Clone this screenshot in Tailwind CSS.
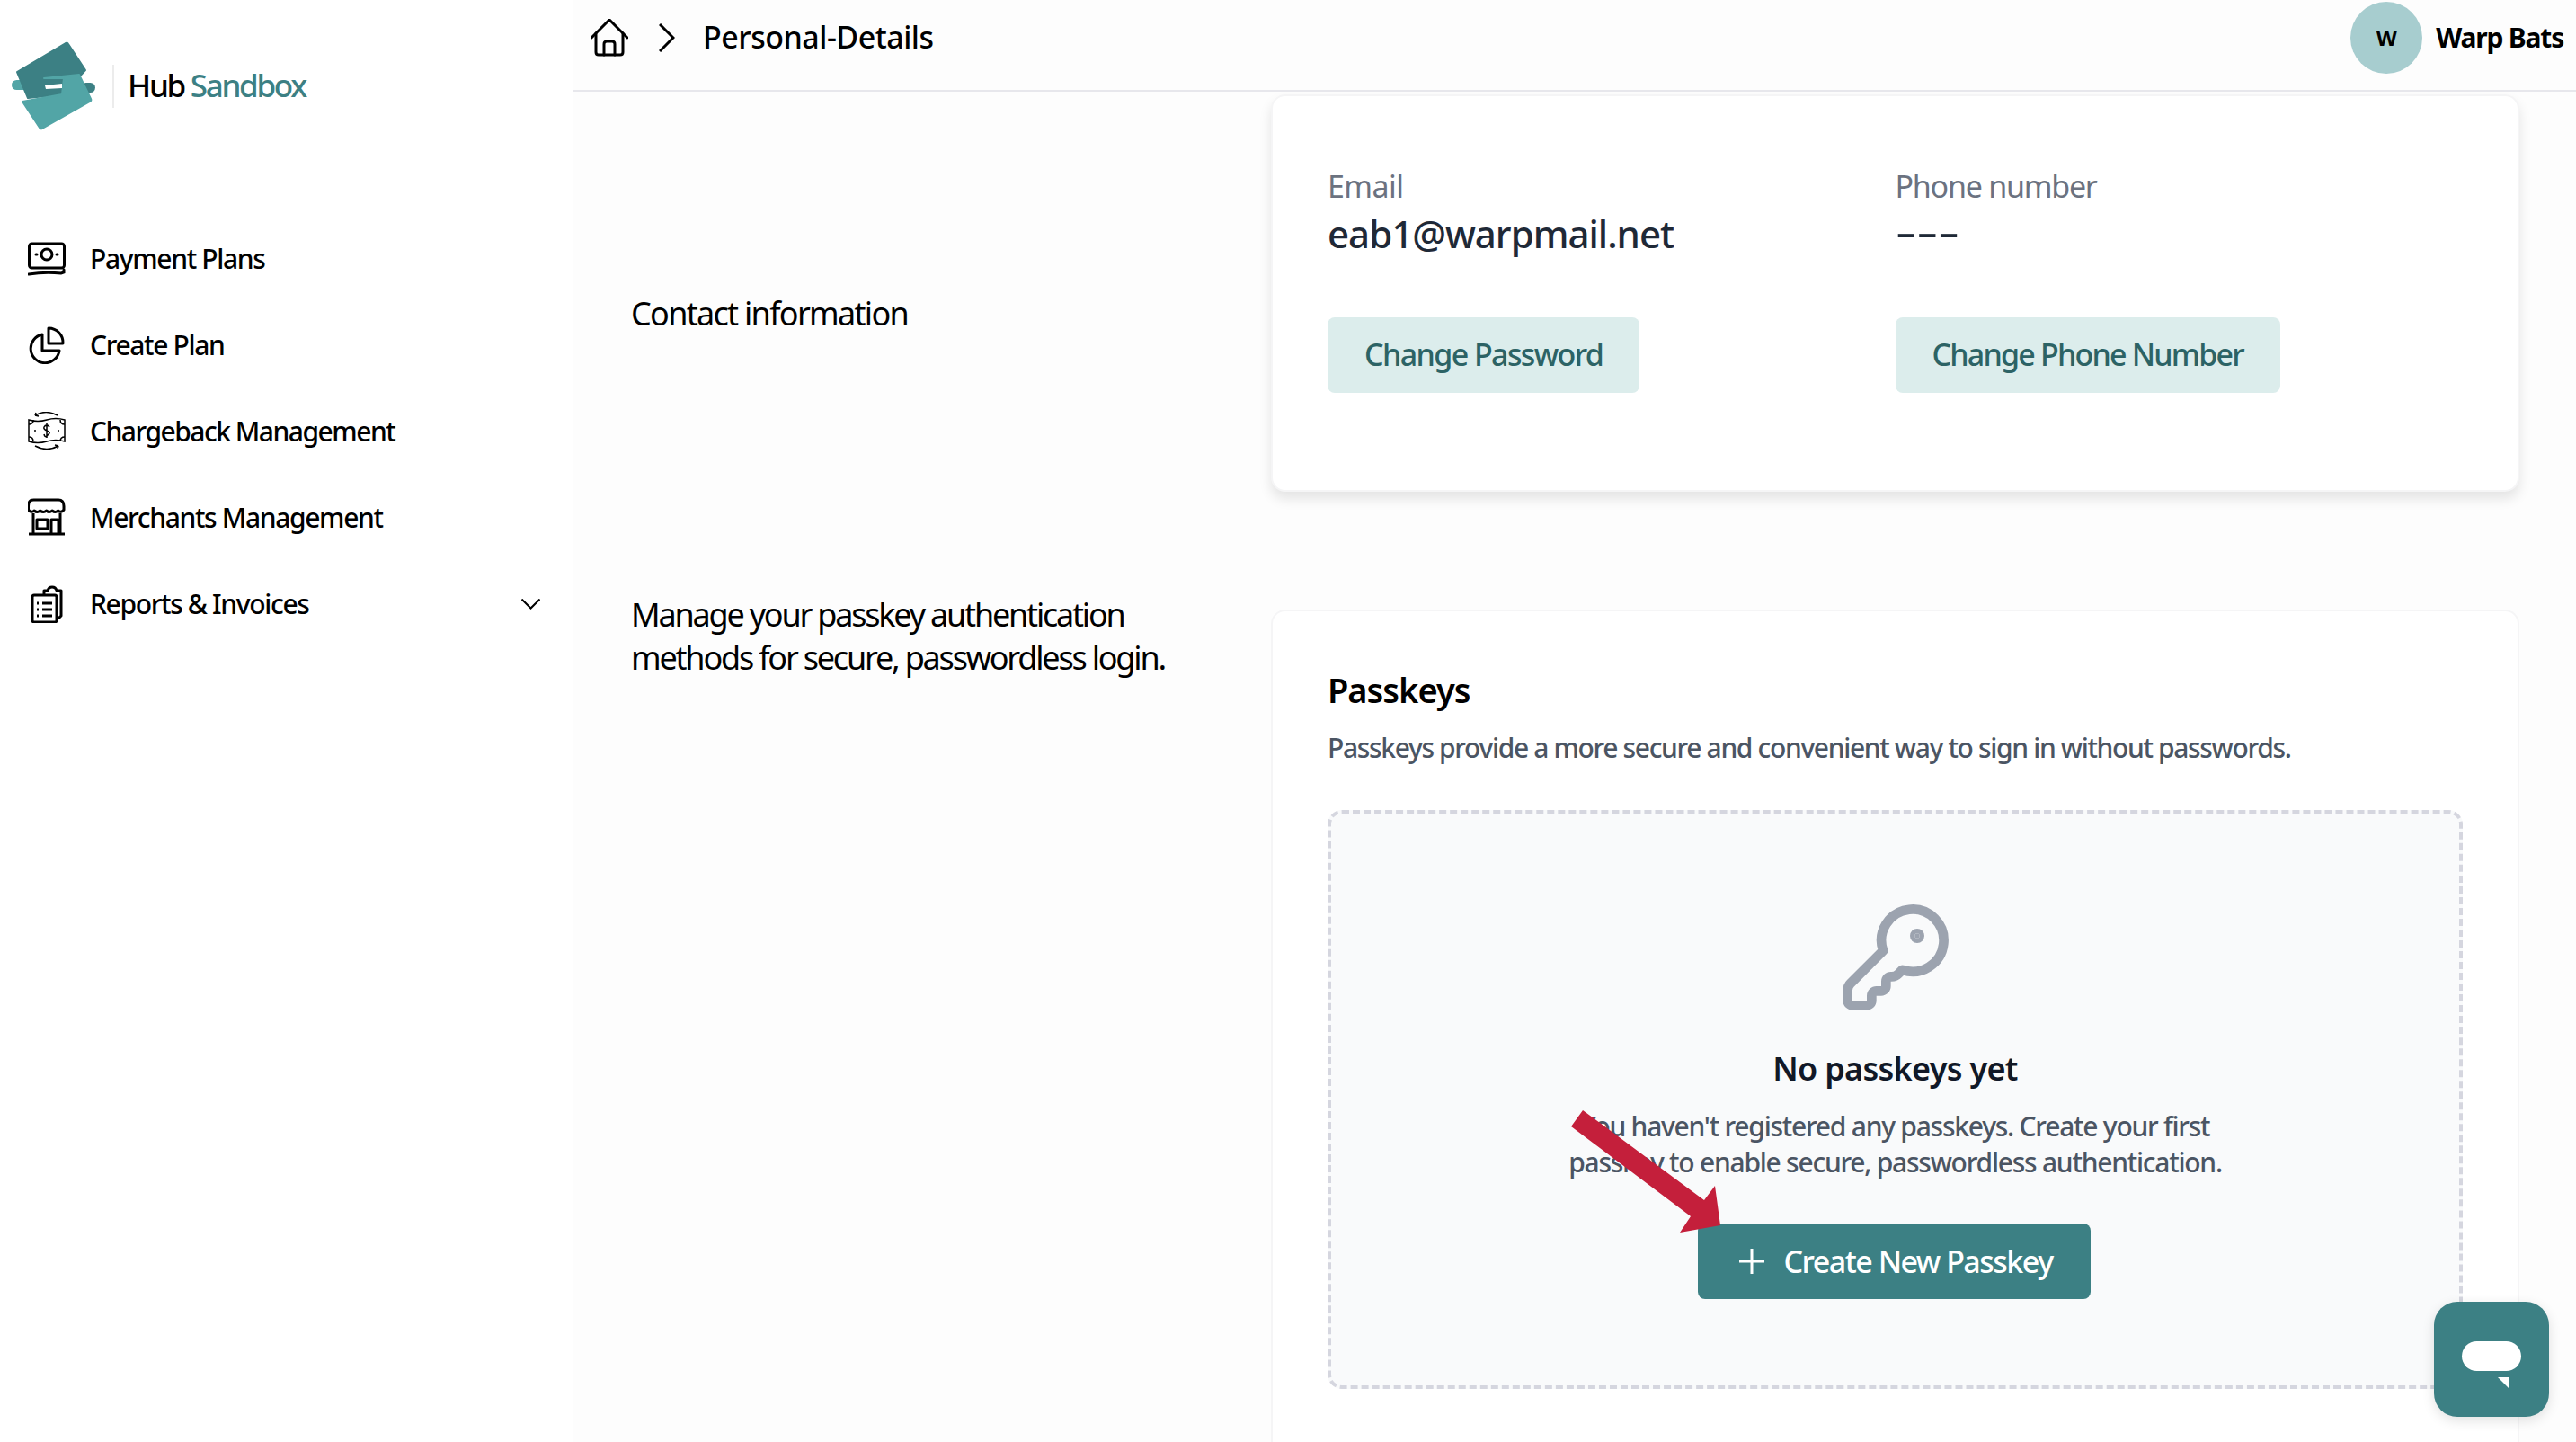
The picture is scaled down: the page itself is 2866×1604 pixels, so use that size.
<!DOCTYPE html>
<html lang="en">
<head>
<meta charset="UTF-8">
<title>Personal Details</title>
<script src="https://cdn.jsdelivr.net/npm/@tailwindcss/browser@4"></script>
</head>
<body class="bg-white font-['Noto_Sans',sans-serif] text-black">
<div class="relative flex h-[1604px] w-[2866px] overflow-hidden">

  <!-- Sidebar -->
  <aside class="h-full w-[638px] shrink-0 bg-white">
    <div class="flex h-[239px] items-start pt-[46px] pl-[12px]">
      <svg class="h-[100px] w-[100px] shrink-0" viewBox="12 46 100 100">
        <rect x="13" y="89" width="20" height="11" rx="5.5" fill="#52a5a6"/>
        <rect x="90" y="92" width="16" height="11" rx="5.5" fill="#3c8084"/>
        <path d="M19 80 L73 48 Q75 47 76 49 L95 78 L70 105 L31 109 Z" fill="#3c8084" stroke="#3c8084" stroke-width="2" stroke-linejoin="round"/>
        <path d="M49 87 L88 83 L101 110 Q102 112 100 113 L47 143 Q45 144 44 142 L25 113 L69 105 L71 87 Z" fill="#52a5a6" stroke="#52a5a6" stroke-width="2" stroke-linejoin="round"/>
        <path d="M50 95 L69 93 L69 98 L51 99 Z" fill="#fff"/>
      </svg>
      <div class="mt-[26px] ml-[13px] h-[48px] w-[2px] bg-[#ececec]"></div>
      <div class="mt-[25px] ml-[15px] text-[35px] leading-[48px] font-medium tracking-[-2.3px]">Hub <span class="text-[#3c8084]">Sandbox</span></div>
    </div>
    <nav class="flex flex-col text-[30px] font-medium tracking-[-1.35px]">
      <div class="flex h-[96px] items-center pl-[31px]">
        <svg class="mt-[4px] h-[42px] w-[42px] shrink-0" viewBox="0 0 42 42" fill="none" stroke="#000" stroke-width="3">
          <rect x="1.5" y="3" width="39" height="27" rx="3"/>
          <circle cx="21" cy="15" r="6"/>
          <path d="M9 15h1M32 15h1M1 37q18-3 36-1l3-1v-3" stroke-linecap="round"/>
        </svg>
        <span class="ml-[27px]">Payment Plans</span>
      </div>
      <div class="flex h-[96px] items-center pl-[31px]">
        <svg class="mt-[1px] h-[42px] w-[42px] shrink-0" viewBox="0 0 42 42" fill="none" stroke="#000" stroke-width="3" stroke-linejoin="round">
          <path d="M16 9A16 16 0 1 0 35 27H16Z"/>
          <path d="M23 2a16 16 0 0 1 16 17H23Z"/>
        </svg>
        <span class="ml-[27px]">Create Plan</span>
      </div>
      <div class="flex h-[96px] items-center pl-[31px]">
        <svg class="h-[42px] w-[42px] shrink-0" viewBox="0 0 42 42" fill="none" stroke="#000" stroke-width="1.5">
          <path d="M1 9q10 3 20 0t20 0v24q-10-3-20 0t-20 0Z"/>
          <path d="M8 4Q20-3 33 4M8 4l1-3M8 4l4 1M34 38Q21 45 8 38M34 38l-1 3M34 38l-4-1M1 14q5 0 5-5M41 14q-5 0-5-5M1 28q5 0 5 5M41 28q-5 0-5 5M7 21h2M33 21h2"/>
          <path d="M24 17q-1-2-3-2t-3 2 3 4 3 3-3 3-3-2M21 13v16"/>
        </svg>
        <span class="ml-[27px] tracking-[-1.5px]">Chargeback Management</span>
      </div>
      <div class="flex h-[96px] items-center pl-[31px]">
        <svg class="h-[42px] w-[42px] shrink-0" viewBox="0 0 42 42" fill="none" stroke="#000" stroke-width="3" stroke-linejoin="round">
          <path d="M8 2h26q6 0 6 7v4q-3 4-6.500 1-3 3-6.500 0-3 3-6.500 0-3 3-7 0-3 3-6.500 0-3 3-6.500-1V9q0-7 6-7Z"/>
          <path d="M6 17v23M36 17v23M1 40h40"/>
          <rect x="10" y="24" width="12" height="10"/>
          <path d="M26 40V24h8v16"/>
        </svg>
        <span class="ml-[27px]">Merchants Management</span>
      </div>
      <div class="flex h-[96px] items-center pl-[31px]">
        <svg class="mt-[1px] h-[42px] w-[42px] shrink-0" viewBox="0 0 42 42" fill="none" stroke="#000" stroke-width="3" stroke-linejoin="round">
          <path d="M18 10V6h4q1-4 5-4t5 4h5v28l-2 2h-3"/>
          <rect x="5" y="11" width="27" height="30" rx="2"/>
          <path d="M10 20h2M16 20h11M10 27h2M16 27h11M10 34h2M16 34h11"/>
        </svg>
        <span class="ml-[27px] flex-1">Reports &amp; Invoices</span>
        <svg class="mt-[2px] mr-[37px] h-[12px] w-[21px]" viewBox="0 0 21 12" fill="none" stroke="#000" stroke-width="2"><path d="M.500.500l10 10 10-10"/></svg>
      </div>
    </nav>
  </aside>

  <!-- Main -->
  <div class="flex h-full flex-1 flex-col bg-[#fdfdfd]">
    <header class="flex h-[102px] shrink-0 items-start border-b-2 border-[#e7e7ec] pt-[2px] pr-[14px] pl-[19px]">
      <div class="flex h-[80px] flex-1 items-center">
        <svg class="h-[42px] w-[42px]" viewBox="0 0 42 42" fill="none" stroke="#000" stroke-width="3" stroke-linecap="round" stroke-linejoin="round">
          <path d="M1 21 21 1l20 20"/>
          <path d="M6 16v21q0 3 3 3h24q3 0 3-3V16"/>
          <path d="M15 40V28q0-3 3-3h6q3 0 3 3v12"/>
        </svg>
        <svg class="ml-[34px] h-[32px] w-[18px]" viewBox="0 0 18 32" fill="none" stroke="#000" stroke-width="3"><path d="M1 1l15 15L1 31"/></svg>
        <span class="-mt-[2px] ml-[31px] text-[34px] font-medium tracking-[-0.5px]">Personal-Details</span>
      </div>
      <div class="flex h-[80px] items-center">
        <div class="flex h-[80px] w-[80px] items-center justify-center rounded-full bg-[#a7cdcf] text-[24px] font-bold">W</div>
        <span class="-mt-[2px] ml-[15px] text-[30px] font-bold tracking-[-1.2px]">Warp Bats</span>
      </div>
    </header>

    <main class="flex flex-1 flex-col overflow-hidden pt-[3px] pr-[63px] pl-[64px]">
      <section class="flex shrink-0">
        <p class="w-[712px] shrink-0 pt-[220px] text-[36px] leading-[48px] tracking-[-1.7px]">Contact information</p>
        <div class="h-[442px] flex-1 rounded-[16px] border-2 border-[#f5f5f6] bg-white px-[61px] pt-[76px] shadow-[0_8px_14px_rgba(0,0,0,0.1)]">
          <div class="grid grid-cols-2">
            <div>
              <p class="text-[34px] leading-[48px] tracking-[-0.6px] text-[#6b7280]">Email</p>
              <p class="mt-[1px] text-[42px] leading-[56px] font-medium tracking-[-1px] text-[#1f2937]">eab1@warpmail.net</p>
              <button class="mt-[65px] h-[84px] rounded-[8px] bg-[#dcedec] px-[41px] pb-[2px] text-[34px] font-medium tracking-[-1.6px] text-[#2c6365]">Change Password</button>
            </div>
            <div>
              <p class="text-[34px] leading-[48px] tracking-[-1.25px] text-[#6b7280]">Phone number</p>
              <p class="mt-[1px] w-fit origin-left -translate-y-[3px] scale-x-[1.75] text-[42px] leading-[56px] font-medium text-[#1f2937]">---</p>
              <button class="mt-[65px] h-[84px] rounded-[8px] bg-[#dcedec] px-[41px] pb-[2px] text-[34px] font-medium tracking-[-1.8px] text-[#2c6365]">Change Phone Number</button>
            </div>
          </div>
        </div>
      </section>

      <section class="mt-[131px] flex flex-1">
        <p class="-mt-[18px] w-[712px] shrink-0 text-[36px] leading-[48px] tracking-[-2.2px]">Manage your passkey authentication<br>methods for secure, passwordless login.</p>
        <div class="relative flex-1 rounded-t-[16px] border-2 border-b-0 border-[#f5f5f6] bg-white px-[61px] pt-[65px]">
          <h2 class="text-[38px] leading-[44px] font-semibold tracking-[-1px]">Passkeys</h2>
          <p class="mt-[23px] text-[30px] leading-[40px] font-medium tracking-[-1.35px] text-[#4b5563]">Passkeys provide a more secure and convenient way to sign in without passwords.</p>
          <div class="mt-[49px] flex h-[644px] flex-col items-center rounded-[16px] border-4 border-dashed border-[#d5d6df] bg-[#f9fafb] pt-[96px]">
            <svg class="h-[128px] w-[128px] text-[#9ca3af]" viewBox="0 0 24 24" fill="none" stroke="currentColor" stroke-width="2" stroke-linecap="round" stroke-linejoin="round">
              <path d="M2.586 17.414A2 2 0 0 0 2 18.828V21a1 1 0 0 0 1 1h3a1 1 0 0 0 1-1v-1a1 1 0 0 1 1-1h1a1 1 0 0 0 1-1v-1a1 1 0 0 1 1-1h.172a2 2 0 0 0 1.414-.586l.814-.814a6.500 6.500 0 1 0-4-4z"/>
              <circle cx="16.500" cy="7.500" r=".5" fill="currentColor"/>
            </svg>
            <h3 class="mt-[36px] text-[36px] leading-[48px] font-semibold tracking-[-0.7px] text-[#111827]">No passkeys yet</h3>
            <p class="mt-[20px] text-center text-[30px] leading-[40px] font-medium tracking-[-1.25px] text-[#4b5563]">You haven't registered any passkeys. Create your first<br>passkey to enable secure, passwordless authentication.</p>
            <button class="mt-[48px] -ml-[3px] flex h-[84px] w-[437px] items-center rounded-[8px] bg-[#3c8084] pl-[46px] text-[34px] font-medium tracking-[-1.5px] text-white">
              <svg class="mr-[22px] h-[28px] w-[28px]" viewBox="0 0 28 28" fill="none" stroke="#fff" stroke-width="3"><path d="M14 0v28M0 14h28"/></svg>
              Create New Passkey
            </button>
          </div>
        </div>
      </section>
    </main>
  </div>

  <!-- Annotation arrow -->
  <svg class="absolute top-0 left-0 h-[1604px] w-[2866px]" viewBox="0 0 2866 1604">
    <polygon points="1761,1235 1748,1253 1881,1353 1869,1371 1914,1363 1908,1319 1896,1335" fill="#c41f3b"/>
  </svg>

  <!-- Chat -->
  <div class="absolute top-[1448px] left-[2708px] h-[128px] w-[128px] rounded-[26px] bg-[#3c8084] shadow-[0_4px_14px_rgba(0,0,0,0.12)]">
    <svg class="h-[128px] w-[128px]" viewBox="0 0 128 128" fill="#fff">
      <rect x="31" y="44" width="66" height="33" rx="16.500"/>
      <polygon points="71,84 84,84 84,97"/>
    </svg>
  </div>
</div>
</body>
</html>
